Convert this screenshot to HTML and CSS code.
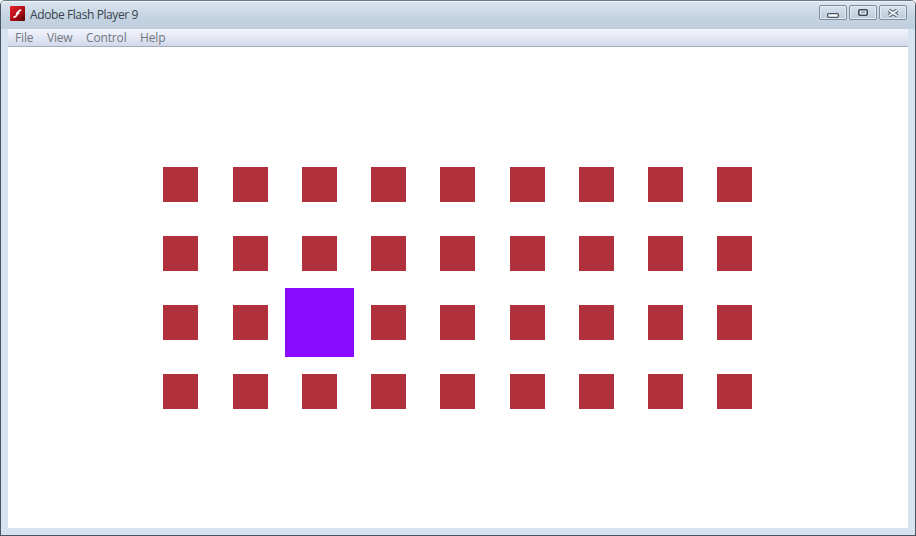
FILE: index.html
```html
<!DOCTYPE html>
<html lang="en">
<head>
    <meta charset="UTF-8">
    <title>Adobe Flash Player 9</title>
    <link rel="stylesheet" href="styles.css">
</head>
<body>

    <div class="window">
        <div class="titlebar">
            <svg class="logo" width="15" height="15" viewBox="0 0 15 15">
                <defs>
                    <linearGradient id="logoBg" x1="0" y1="0" x2="1" y2="1">
                        <stop offset="0" stop-color="#e8222a"/>
                        <stop offset="0.55" stop-color="#b00d14"/>
                        <stop offset="1" stop-color="#4d0306"/>
                    </linearGradient>
                </defs>
                <rect width="15" height="15" rx="1" fill="url(#logoBg)"/>
                <path d="M3.4 11.2c2.6 0 3.3-1.6 3.9-3.4.6-1.9 1.3-3.6 3.9-3.8M5.9 7.4h3.4" fill="none" stroke="#fff" stroke-width="1.7"/>
            </svg>
            <span class="title">Adobe Flash Player 9</span>
            <div class="controls">
                <div class="ctl">
                    <svg class="ctl-min" width="12" height="5" viewBox="0 0 12 5"><rect x="0.65" y="0.65" width="10.7" height="3.7" rx="1" fill="#fff" stroke="#4a5563" stroke-width="1.3"/></svg>
                </div>
                <div class="ctl">
                    <svg width="10" height="7" viewBox="0 0 10 7"><rect x="0.8" y="0.8" width="8.4" height="5.4" rx="1" fill="#eef3f8" stroke="#3f4a58" stroke-width="1.6"/><rect x="3" y="2.5" width="4" height="1.6" fill="#8794a3"/></svg>
                </div>
                <div class="ctl">
                    <svg width="12" height="8" viewBox="0 0 12 8"><path d="M1.8 1.2l8.4 5.6M10.2 1.2l-8.4 5.6" stroke="#46515e" stroke-width="3.6"/><path d="M1.8 1.2l8.4 5.6M10.2 1.2l-8.4 5.6" stroke="#f4f7fa" stroke-width="1.8"/></svg>
                </div>
            </div>
        </div>

        <div class="menubar">
            <span class="menu-item">File</span>
            <span class="menu-item">View</span>
            <span class="menu-item">Control</span>
            <span class="menu-item">Help</span>
        </div>

        <div class="stage">
            <div class="grid">
                <div class="sq"></div><div class="sq"></div><div class="sq"></div><div class="sq"></div><div class="sq"></div><div class="sq"></div><div class="sq"></div><div class="sq"></div><div class="sq"></div>
                <div class="sq"></div><div class="sq"></div><div class="sq"></div><div class="sq"></div><div class="sq"></div><div class="sq"></div><div class="sq"></div><div class="sq"></div><div class="sq"></div>
                <div class="sq"></div><div class="sq"></div><div class="sq sq-active"></div><div class="sq"></div><div class="sq"></div><div class="sq"></div><div class="sq"></div><div class="sq"></div><div class="sq"></div>
                <div class="sq"></div><div class="sq"></div><div class="sq"></div><div class="sq"></div><div class="sq"></div><div class="sq"></div><div class="sq"></div><div class="sq"></div><div class="sq"></div>
            </div>
        </div>
    </div>

</body>
</html>
```

FILE: styles.css
```css
html, body {
    margin: 0;
    padding: 0;
    background-color: #ffffff;
}
body {
    font-family: "Open Sans", "Noto Sans", Arial, sans-serif;
    overflow: hidden;
}
.window {
    box-sizing: border-box;
    width: 916px;
    height: 536px;
    display: flex;
    flex-direction: column;
    border: 1px solid #4b5560;
    border-top-color: #6c7a88;
    border-radius: 5px 5px 0 0;
    background-color: #d6e3f0;
    padding: 0 7px 7px 7px;
}
.titlebar {
    height: 28px;
    margin: 0 -7px;
    padding: 0 8px 0 9px;
    display: flex;
    align-items: center;
    background: linear-gradient(#dbe5ef 0, #c4d3e2 60%, #bfcfdf 100%);
    border-radius: 4px 4px 0 0;
    box-shadow: inset 0 1px 0 #eef3f8;
}
.logo {
    margin-top: -3px;
    flex: none;
}
.title {
    margin-left: 5px;
    margin-top: -1px;
    font-size: 12px;
    letter-spacing: -0.4px;
    color: #39424d;
}
.controls {
    margin-left: auto;
    margin-top: -5px;
    display: flex;
    gap: 2px;
}
.ctl {
    box-sizing: border-box;
    width: 28px;
    height: 15px;
    display: flex;
    align-items: center;
    justify-content: center;
    border: 1px solid #7f8d9c;
    border-radius: 2px;
    background: linear-gradient(#d8e3ee, #bccbda);
    box-shadow: inset 0 0 0 1px #e3eaf2;
}
.ctl-min {
    margin-top: 6px;
}
.menubar {
    height: 18px;
    flex: none;
    display: flex;
    gap: 13.5px;
    padding-left: 7px;
    align-items: center;
    box-sizing: border-box;
    background: linear-gradient(#f3f5fb 0, #e6e9f5 45%, #d3d8ea 100%);
    border-bottom: 1px solid #a3adbd;
    font-size: 12px;
    letter-spacing: -0.15px;
    color: #6f7783;
}
.stage {
    flex: 1;
    background-color: #ffffff;
    padding: 120px 0 0 155.4px;
}
.grid {
    display: grid;
    grid-template-columns: repeat(9, 35px);
    grid-auto-rows: 35px;
    column-gap: 34.25px;
    row-gap: 34px;
    justify-items: center;
    align-items: center;
}
.sq {
    width: 35px;
    height: 35px;
    background-color: #b0303b;
}
.sq-active {
    width: 69px;
    height: 69px;
    margin: -17px;
    background-color: #8a0bff;
}
```
